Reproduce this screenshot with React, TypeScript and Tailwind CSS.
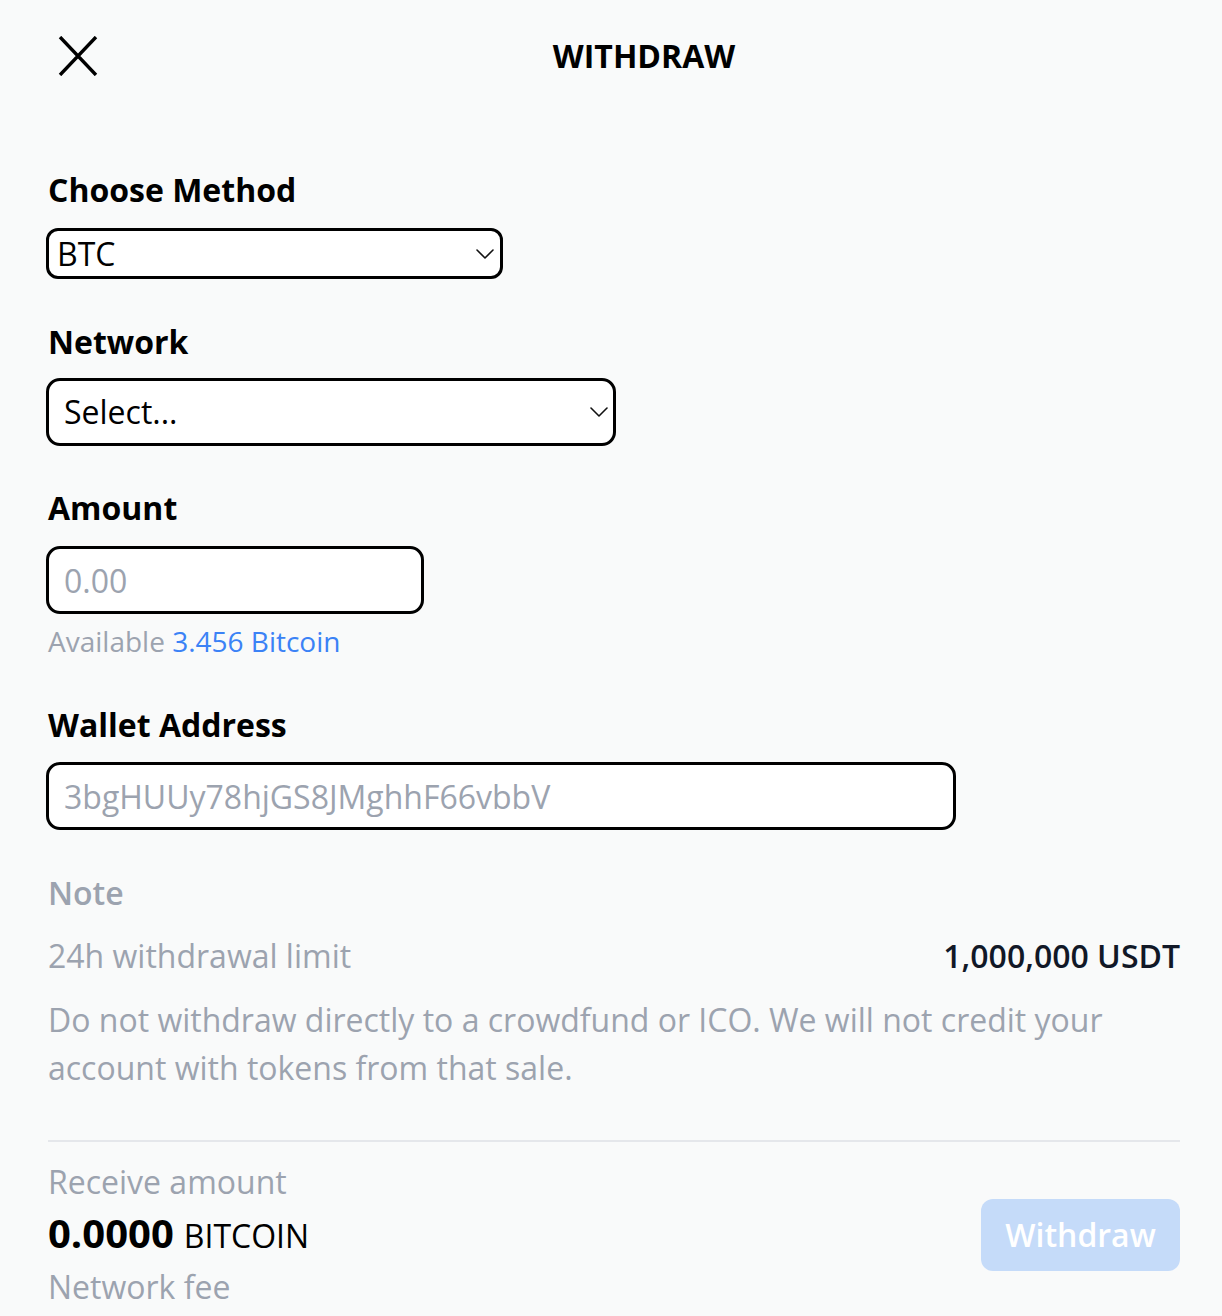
import React from "react"

const font = { fontFamily: '"Open Sans", "Noto Sans", sans-serif' }

function Chevron() {
    return (
        <svg width="18" height="10" viewBox="0 0 18 10" fill="none" className="shrink-0">
            <path d="M1 1l8 8 8-8" stroke="#111" strokeWidth="1.6" strokeLinecap="round" strokeLinejoin="round" />
        </svg>
    )
}

export default function App() {
    return (
        <div className="min-h-[1316px] w-full bg-[#f9fafa] text-black" style={font}>
            <header className="flex h-[112px] items-center pl-[48px] pr-[42px]">
                <button className="flex h-[60px] w-[60px] items-center justify-center">
                    <svg width="40" height="40" viewBox="0 0 40 40" fill="none">
                        <path d="M2 1l36 38M38 1L2 39" stroke="#000" strokeWidth="3.4" />
                    </svg>
                </button>
                <h1 className="flex-1 text-center text-[32px] font-bold leading-[40px]">WITHDRAW</h1>
            </header>

            <main className="pl-[48px] pr-[42px]">
                <label className="mt-[58px] block text-[32px] font-bold leading-[40px]">Choose Method</label>
                <div className="-ml-[2px] mt-[18px] flex h-[51px] w-[457px] items-center justify-between rounded-[12px] border-[3px] border-black bg-white pl-[8px] pr-[6px]">
                    <span className="text-[32px] leading-[40px]">BTC</span>
                    <Chevron />
                </div>

                <label className="mt-[43px] block text-[32px] font-bold leading-[40px]">Network</label>
                <div className="-ml-[2px] mt-[16px] flex h-[68px] w-[570px] items-center justify-between rounded-[14px] border-[3px] border-black bg-white pl-[15px] pr-[5px]">
                    <span className="text-[32px] leading-[40px]">Select...</span>
                    <Chevron />
                </div>

                <label className="mt-[42px] block text-[32px] font-bold leading-[40px]">Amount</label>
                <input
                    placeholder="0.00"
                    className="-ml-[2px] mt-[18px] block h-[68px] w-[378px] rounded-[14px] border-[3px] border-black bg-white px-[15px] text-[32px] outline-none placeholder:text-[#9ca3af]"
                />
                <p className="mt-[7px] text-[28px] leading-[40px] text-[#9ca3af]">
                    Available <span className="text-[#3b82f6]">3.456 Bitcoin</span>
                </p>

                <label className="mt-[44px] block text-[32px] font-bold leading-[40px]">Wallet Address</label>
                <input
                    placeholder="3bgHUUy78hjGS8JMghhF66vbbV"
                    className="-ml-[2px] mt-[17px] block h-[68px] w-[910px] rounded-[14px] border-[3px] border-black bg-white px-[15px] text-[32px] outline-none placeholder:text-[#9ca3af]"
                />

                <h3 className="mt-[43px] text-[32px] font-semibold leading-[40px] text-[#9ca3af]">Note</h3>
                <div className="mt-[23px] flex items-center justify-between text-[32px] leading-[40px]">
                    <span className="text-[#9ca3af]">24h withdrawal limit</span>
                    <span className="font-semibold text-[#111827]">1,000,000 USDT</span>
                </div>
                <p className="mt-[20px] max-w-[1080px] text-[32px] leading-[48px] text-[#9ca3af]">
                    Do not withdraw directly to a crowdfund or ICO. We will not credit your account with tokens from that sale.
                </p>

                <div className="mt-[48px] h-[2px] bg-[#e5e7eb]" />

                <div className="mt-[20px] flex items-center justify-between">
                    <div>
                        <div className="text-[32px] leading-[40px] text-[#9ca3af]">Receive amount</div>
                        <div className="flex items-baseline gap-[10px] leading-[62px]">
                            <span className="text-[40px] font-bold">0.0000</span>
                            <span className="text-[32px]">BITCOIN</span>
                        </div>
                        <div className="text-[32px] leading-[40px] text-[#9ca3af]">Network fee</div>
                    </div>
                    <button className="flex h-[72px] w-[199px] items-center justify-center rounded-[12px] bg-[#c5dbf9] text-[32px] font-semibold text-white">
                        Withdraw
                    </button>
                </div>
            </main>
        </div>
    )
}
